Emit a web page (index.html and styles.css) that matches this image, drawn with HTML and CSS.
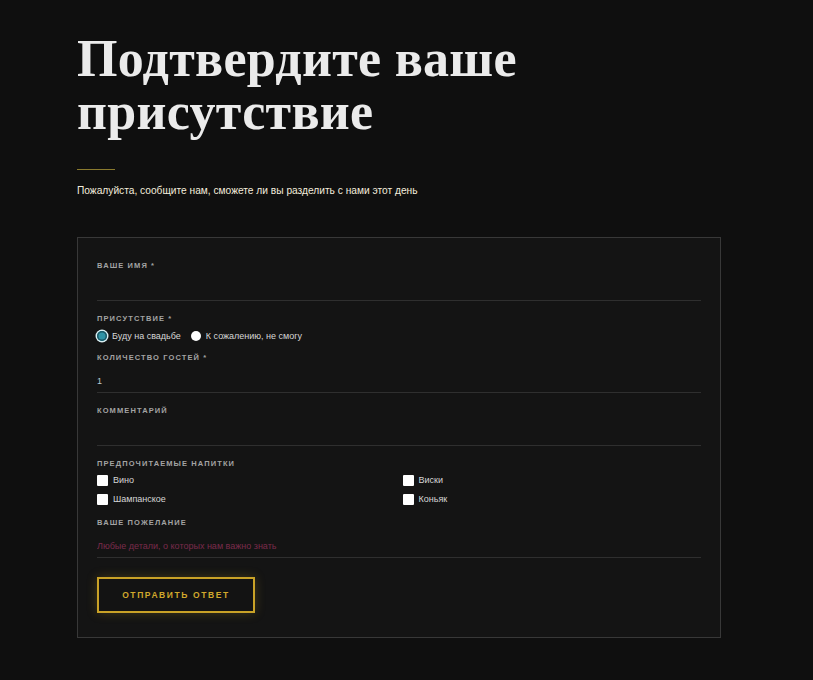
FILE: index.html
```html
<!DOCTYPE html>
<html lang="ru">
<head>
    <meta charset="UTF-8">
    <meta name="viewport" content="width=device-width, initial-scale=1.0">
    <title>Подтвердите ваше присутствие</title>
    <link rel="stylesheet" href="styles.css">
</head>
<body>
    <section class="rsvp">
        <h1>Подтвердите ваше присутствие</h1>
        <div class="divider"></div>
        <p class="lead">Пожалуйста, сообщите нам, сможете ли вы разделить с нами этот день</p>

        <form class="rsvp-form">
            <div class="field field-name">
                <label class="field-label" for="name">Ваше имя *</label>
                <input class="line-input" type="text" id="name">
            </div>

            <div class="field field-attend">
                <span class="field-label">Присутствие *</span>
                <div class="radios">
                    <label class="choice"><input type="radio" name="attend" checked> Буду на свадьбе</label>
                    <label class="choice"><input type="radio" name="attend"> К сожалению, не смогу</label>
                </div>
            </div>

            <div class="field field-guests">
                <label class="field-label" for="guests">Количество гостей *</label>
                <input class="line-input" type="text" id="guests" value="1">
            </div>

            <div class="field field-comment">
                <label class="field-label" for="comment">Комментарий</label>
                <input class="line-input" type="text" id="comment">
            </div>

            <div class="field field-drinks">
                <span class="field-label">Предпочитаемые напитки</span>
                <div class="drinks">
                    <label class="choice"><input type="checkbox"> Вино</label>
                    <label class="choice"><input type="checkbox"> Виски</label>
                    <label class="choice"><input type="checkbox"> Шампанское</label>
                    <label class="choice"><input type="checkbox"> Коньяк</label>
                </div>
            </div>

            <div class="field">
                <label class="field-label" for="wish">Ваше пожелание</label>
                <input class="line-input" type="text" id="wish" placeholder="Любые детали, о которых нам важно знать">
            </div>

            <button type="button" class="submit">Отправить ответ</button>
        </form>
    </section>
</body>
</html>
```

FILE: styles.css
```css
body {
    margin: 0;
    background: #0f0f0f;
    color: #e8e8e8;
    font-family: 'Liberation Sans', Arial, sans-serif;
}
.rsvp {
    width: 644px;
    padding: 32px 0 40px 77px;
}
h1 {
    margin: 0;
    font-family: 'Liberation Serif', 'DejaVu Serif', serif;
    font-weight: 700;
    font-size: 52px;
    line-height: 53px;
    letter-spacing: 0.3px;
    color: #ebebeb;
    width: 500px;
}
.divider {
    width: 38px;
    height: 1px;
    background: #8a7a2e;
    margin-top: 31px;
}
.lead {
    margin: 13px 0 0;
    font-size: 10.2px;
    line-height: 16px;
    color: #f3ecdc;
}
.rsvp-form {
    margin-top: 38px;
    background: #141414;
    border: 1px solid #383838;
    padding: 23px 19px 24px 19px;
}
.field {
    margin-bottom: 12px;
}
.field-name {
    margin-bottom: 13px;
}
.field-attend {
    margin-bottom: 10px;
}
.field-guests {
    margin-bottom: 13px;
}
.field-comment {
    margin-bottom: 13px;
}
.field-label {
    display: block;
    font-size: 7.5px;
    line-height: 10px;
    font-weight: 700;
    letter-spacing: 1.1px;
    text-transform: uppercase;
    color: #a3a3a3;
    margin-bottom: 3px;
}
.line-input {
    display: block;
    box-sizing: border-box;
    width: 100%;
    height: 27px;
    padding: 3px 0 0;
    border: 0;
    border-bottom: 1px solid #2f2f2f;
    background: transparent;
    color: #bccacd;
    font-family: inherit;
    font-size: 9px;
    outline: none;
}
.line-input::placeholder {
    color: #7a2b4b;
}
.radios {
    display: flex;
    gap: 10px;
    margin-top: 5px;
}
.choice {
    display: flex;
    align-items: center;
    gap: 5px;
    height: 14px;
    font-size: 9px;
    color: #d6d6d6;
}
.choice input {
    appearance: none;
    margin: 0;
    width: 10px;
    height: 10px;
    background: #fff;
}
.choice input[type="radio"] {
    border-radius: 50%;
}
.choice input[type="radio"]:checked {
    background: #2f93a6;
    box-shadow: 0 0 0 1.5px #d9eef2, inset 0 0 0 1.5px #1a5866;
}
.choice input[type="checkbox"] {
    width: 11px;
    height: 11px;
    border-radius: 1px;
}
.drinks {
    display: grid;
    grid-template-columns: 1fr 1fr;
    column-gap: 7px;
    row-gap: 5px;
    margin-top: 4px;
}
.submit {
    margin-top: 7px;
    width: 158px;
    height: 36px;
    background: #131313;
    border: 2px solid #c9a227;
    color: #d1a82c;
    font-family: inherit;
    font-size: 8.5px;
    font-weight: 700;
    letter-spacing: 1.6px;
    text-transform: uppercase;
    box-shadow: 0 0 10px rgba(201, 162, 39, 0.25);
    cursor: pointer;
}
```
